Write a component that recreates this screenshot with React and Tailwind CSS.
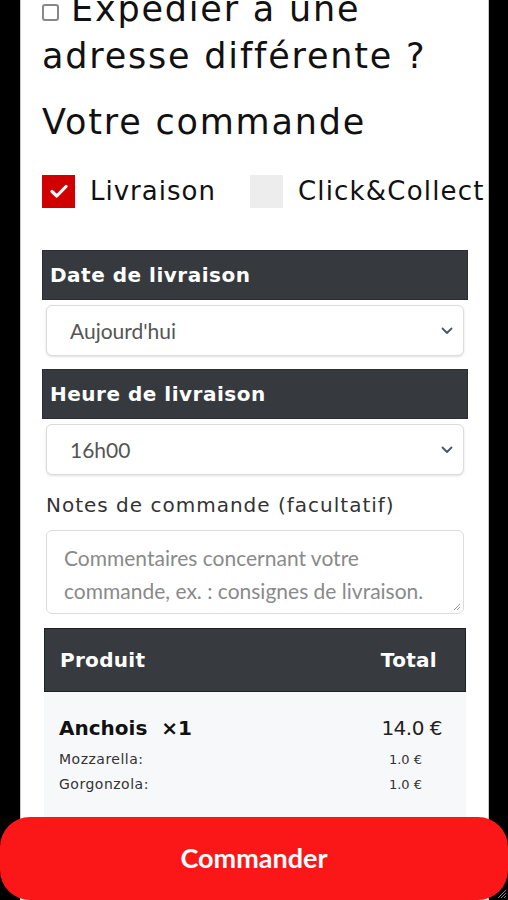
const poppins = { fontFamily: "'DejaVu Sans', Inter, sans-serif" };

const ChevronDown = () => (
  <svg width="12" height="8" viewBox="0 0 12 8" className="text-gray-600">
    <path d="M1.5 1.5 L6 6 L10.5 1.5" fill="none" stroke="currentColor" strokeWidth="1.8" strokeLinecap="round" strokeLinejoin="round" />
  </svg>
);

const SectionHeader = ({ children }) => (
  <div className="h-[50px] bg-[#363a3f] border border-[#2a2d31] flex items-center px-[7px]">
    <span className="text-white text-[20px] font-bold tracking-[0.5px]" style={poppins}>
      {children}
    </span>
  </div>
);

const FakeSelect = ({ value }) => (
  <div className="mx-[4px] h-[51px] rounded-[6px] border border-[#dcdcdc] bg-white flex items-center justify-between pl-[23px] pr-[10px] shadow-sm">
    <span className="text-[21px] text-[#555] font-['Lato',sans-serif]">{value}</span>
    <ChevronDown />
  </div>
);

export default function App() {
  return (
    <div className="relative w-[508px] h-[900px] bg-black overflow-hidden">
      <div className="ml-[20px] w-[469px] h-full bg-white border-x border-[#c8c8c8] overflow-hidden">
        <div className="pl-[21px] pr-[20px]" style={poppins}>
          {/* ship to another address */}
          <div className="-mt-[14px] text-[35px] leading-[47px] tracking-[1.8px] text-[#111] font-normal whitespace-nowrap">
            <span className="inline-block w-[17px] h-[17px] border-2 border-[#888] rounded-[3px] mr-[12px] align-[0px]" />
            Expédier à une
            <br />
            adresse différente ?
          </div>

          <div className="mt-[19px] text-[35px] leading-[47px] tracking-[1.8px] text-[#111]">Votre commande</div>

          {/* delivery mode */}
          <div className="mt-[28px] flex items-center h-[34px] whitespace-nowrap">
            <span className="w-[33px] h-[33px] bg-[#d00000] flex items-center justify-center shrink-0">
              <svg width="18" height="14" viewBox="0 0 18 14">
                <path d="M2 7.5 L6.8 12 L16 2.5" fill="none" stroke="white" strokeWidth="3.2" strokeLinecap="round" strokeLinejoin="round" />
              </svg>
            </span>
            <span className="ml-[15px] text-[26px] tracking-[1px] text-[#111]">Livraison</span>
            <span className="ml-[34px] w-[33px] h-[33px] bg-[#ededed] shrink-0" />
            <span className="ml-[15px] text-[26px] tracking-[1.2px] text-[#111]">Click&amp;Collect</span>
          </div>

          <div className="mt-[42px]">
            <SectionHeader>Date de livraison</SectionHeader>
            <div className="mt-[5px]">
              <FakeSelect value="Aujourd'hui" />
            </div>
          </div>

          <div className="mt-[13px]">
            <SectionHeader>Heure de livraison</SectionHeader>
            <div className="mt-[5px]">
              <FakeSelect value="16h00" />
            </div>
          </div>

          <div className="mt-[15px] ml-[4px] text-[20px] tracking-[1px] text-[#333]">Notes de commande (facultatif)</div>

          <div className="relative mt-[10px] mx-[4px] h-[84px] rounded-[6px] border border-[#dcdcdc] bg-white pl-[17px] pr-[10px] pt-[10px] font-['Lato',sans-serif] text-[21px] leading-[33px] text-[#8a8a8a]">
            Commentaires concernant votre commande, ex. : consignes de livraison.
            <svg width="8" height="8" viewBox="0 0 8 8" className="absolute right-[2px] bottom-[2px]">
              <path d="M7 1 L1 7 M7 4 L4 7" stroke="#999" strokeWidth="1" />
            </svg>
          </div>

          {/* order table */}
          <div className="mt-[14px] mx-[2px]">
            <div className="h-[64px] bg-[#373a3f] border border-[#1f2124] flex items-center justify-between pl-[15px] pr-[28px]">
              <span className="text-white text-[20px] font-bold tracking-[0.3px]">Produit</span>
              <span className="text-white text-[20px] font-bold tracking-[0.3px]">Total</span>
            </div>
            <div className="bg-[#f7f8fa] border-b border-[#e4e5e8] pl-[15px] pr-[24px] pt-[21px] pb-[20px]">
              <div className="flex items-center justify-between">
                <span className="text-[20px] font-bold text-[#111]">Anchois&nbsp; ×1</span>
                <span className="text-[20px] text-[#222] tracking-[-0.5px]">14.0 €</span>
              </div>
              <div className="mt-[4px] flex items-center justify-between text-[14px] tracking-[0.5px] text-[#333] leading-[25px]">
                <span>Mozzarella:</span>
                <span className="mr-[20px] tracking-normal text-[13px]">1.0 €</span>
              </div>
              <div className="flex items-center justify-between text-[14px] tracking-[0.5px] text-[#333] leading-[25px]">
                <span>Gorgonzola:</span>
                <span className="mr-[20px] tracking-normal text-[13px]">1.0 €</span>
              </div>
            </div>
          </div>
        </div>
      </div>

      {/* floating order button */}
      <button className="absolute left-0 right-0 top-[817px] h-[83px] rounded-[30px] bg-[#fb1717] flex items-center justify-center">
        <span className="text-white text-[27px] font-bold font-['Lato',sans-serif]">Commander</span>
      </button>
      <svg width="10" height="10" viewBox="0 0 10 10" className="absolute right-[1px] bottom-[1px]">
        <path d="M9 1 L1 9 M9 4 L4 9 M9 7 L7 9" stroke="#888" strokeWidth="1" />
      </svg>
    </div>
  );
}
